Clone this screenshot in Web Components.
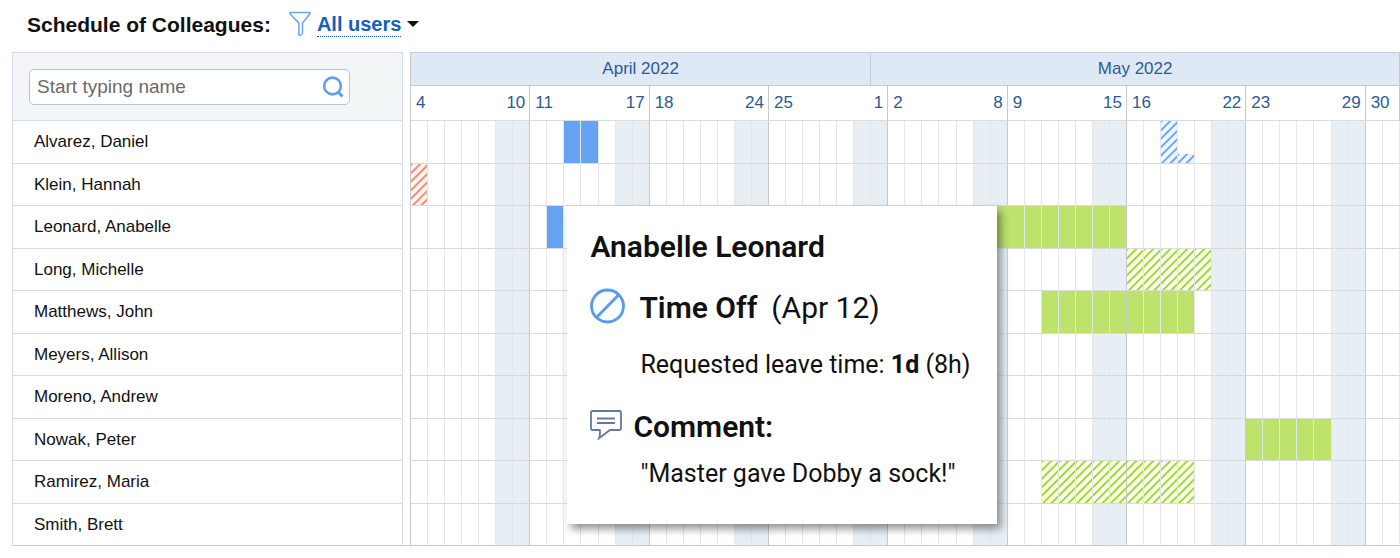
<!DOCTYPE html>
<html lang="en">
<head>
<meta charset="utf-8">
<title>Schedule of Colleagues</title>
<style>
  body { margin: 0; background: #fff; color: #111; font: 17px/20px "Liberation Sans", Arial, sans-serif; }
</style>
</head>
<body>
<schedule-page>
  <user-filter slot="filter">All users</user-filter>
  <schedule-board>
    <leave-card slot="card">
      <span slot="name">Anabelle Leonard</span>
      <span slot="type">Time Off</span>
      <span slot="dates">(Apr 12)</span>
      <span slot="amount">Requested leave time: <b>1d</b> (8h)</span>
      <span slot="comment">"Master gave Dobby a sock!"</span>
    </leave-card>
  </schedule-board>
</schedule-page>

<template id="page-tpl">
  <style>
    :host { display: block; padding: 0 0 11px 12px; }
    header { display: flex; align-items: center; gap: 18px; height: 48px; padding: 0 15px 4px; }
    h1 { margin: 0; font-size: 21px; line-height: 28px; padding-top: 2px; }
  </style>
  <header><h1>Schedule of Colleagues:</h1><slot name="filter"></slot></header>
  <slot></slot>
</template>

<template id="filter-tpl">
  <style>
    :host { display: block; }
    button { display: flex; align-items: center; gap: 6px; border: 0; padding: 0; background: none; font: bold 20px/24px "Liberation Sans", Arial, sans-serif; color: #1560bd; cursor: pointer; }
    svg { display: block; flex: none; }
    span { border-bottom: 1px dotted #1560bd; }
  </style>
  <button type="button" aria-haspopup="listbox">
    <svg width="22" height="26" viewBox="0 0 22 26" fill="none" stroke="#66a3f0" stroke-width="1.5" stroke-linejoin="round"><path d="M1.6 1.5h18.8q.9 0 .5 1.2L13.500 12v10q-.1 1.500-2.600 2.400-1 .1-1-1V12L1.200 3Q.7 1.600 1.600 1.500z"/></svg>
    <span><slot></slot></span>
    <svg width="12" height="6" viewBox="0 0 12 6"><path d="M0 0h12L6 6z" fill="#111"/></svg>
  </button>
</template>

<template id="search-tpl">
  <style>
    :host { display: block; }
    label { display: flex; align-items: center; box-sizing: border-box; max-width: 321px; height: 36px; padding: 0 5px 0 7px; border: 1px solid #b6c5d5; border-radius: 5px; background: #fff; }
    input { flex: 1; min-width: 0; border: 0; padding: 0; outline: 0; background: none; font: 19px/24px "Liberation Sans", Arial, sans-serif; color: #111; }
    input::placeholder { color: #6a6a6a; opacity: 1; }
  </style>
  <label>
    <input type="text" placeholder="Start typing name" aria-label="Start typing name">
    <svg width="22" height="22" viewBox="0 0 22 22" fill="none" stroke="#5f9fee"><circle cx="10.500" cy="10" r="8.400" stroke-width="2.600"/><path d="M15.500 15.500l5 5" stroke-width="3"/></svg>
  </label>
</template>

<template id="card-tpl">
  <style>
    :host { display: block; box-sizing: border-box; width: 430px; padding: 23px 0 35px 23px; background: #fff; box-shadow: 4px 5px 8px rgba(0,0,0,.42); font: 25px/30px Roboto, sans-serif; color: #111; text-align: left; white-space: nowrap; }
    h2, h3, p { margin: 0; }
    h2, h3 { font-size: 30px; line-height: 36px; font-weight: 600; }
    .row { display: flex; align-items: center; }
    .type { gap: 14px; padding: 23px 0 22px; font-size: 30px; line-height: 36px; }
    .type svg { margin-bottom: 4px; }
    .comment { gap: 11px; padding: 29px 0 14px; }
    .comment svg { margin-bottom: 5px; }
    p { padding-left: 50px; }
    svg { flex: none; }
  </style>
  <h2><slot name="name"></slot></h2>
  <div class="row type">
    <svg width="35" height="36" viewBox="0 0 35 36" fill="none" stroke="#559bf0" stroke-width="2.8"><circle cx="17.500" cy="18" r="16"/><path d="M6.500 29.500l22-22.500"/></svg>
    <h3><slot name="type"></slot></h3><slot name="dates"></slot>
  </div>
  <p><slot name="amount"></slot></p>
  <div class="row comment">
    <svg width="32" height="30" viewBox="0 0 32 30" fill="none" stroke="#64799d" stroke-width="1.8"><path d="M2.400 1h27.200Q31 1 31 2.400v16.200q0 1.400-1.400 1.400H20L9 28.300q1.400-3.500.8-8.300H2.400Q1 20 1 18.600V2.400Q1 1 2.400 1zM7 8.500h18M7 13h18"/></svg>
    <h3>Comment:</h3>
  </div>
  <p><slot name="comment"></slot></p>
</template>

<template id="board-tpl">
  <style>
    :host { display: block; }
    table { width: 100%; table-layout: fixed; border-collapse: separate; border-spacing: 0; }
    .who { width: 391px; }
    .gap { width: 8px; }
    th, td { padding: 0; box-sizing: border-box; font-weight: normal; }
    .find { padding: 0 16px; text-align: left; background: #f2f6f7; border: 1px solid #d3deea; }
    .spacer { border-right: 1px solid #c9c9cd; }
    .month { height: 34px; background: #dfe9f5; color: #2c5a94; border: 1px solid #c4ccd6; border-left: 0; }
    .week { height: 35px; color: #2c5a94; border-right: 1px solid #c9c9cd; border-bottom: 1px solid #dcdcdc; }
    .week div { display: flex; justify-content: space-between; padding: 0 4px 0 5px; }
    tbody tr { height: 43px; }
    tbody tr:nth-child(even) { height: 42px; }
    .name { padding: 0 21px; text-align: left; color: #111; border: 1px solid #d3deea; border-top: 0; border-left: 1px solid #d3deea; }
    .day { border-right: 1px solid #e6e6ea; border-bottom: 1px solid #dadada; }
    .off { background: #e7eff5; }
    .end { border-right-color: #c9c9cd; }
    .timeoff { background: #66a3f2; }
    .vacation { background: #bde36d; }
    .asked { background: repeating-linear-gradient(135deg, var(--line) 0 1px, var(--fill) 2px 5px, var(--line) 6px); }
    .sick { --line: #f98b72; --fill: #fff5f2; }
    .half, .blue { --line: #6fa9f5; --fill: #f1f7ff; }
    .half { background-size: 100% 9px; background-position: bottom; background-repeat: no-repeat; }
    .green { --line: #a2da34; --fill: #fbfff1; }
    tbody tr:last-child > * { border-bottom-color: #c9c9cd; }
    tbody tr:last-child .spacer { border-bottom: 1px solid #c9c9cd; }
    .anchor { position: relative; }
    .pop { position: absolute; z-index: 1; top: 0; left: calc(100% + 4px); }
  </style>
  <table>
    <colgroup><col class="who"><col class="gap"><col span="58"></colgroup>
    <thead>
      <tr><th class="find" rowspan="2"><search-box></search-box></th><td class="spacer" rowspan="2"></td><th class="month" colspan="27">April 2022</th><th class="month" colspan="31">May 2022</th></tr>
      <tr class="weeks"></tr>
    </thead>
    <tbody></tbody>
  </table>
</template>

<script>
  const attach = (el, id) => {
    const root = el.attachShadow({ mode: "open" });
    root.append(document.getElementById(id).content.cloneNode(true));
    return root;
  };

  // Day indexes count from Monday, 4 April 2022.
  const DAYS = 58;
  const WEEKS = [[4, 10], [11, 17], [18, 24], [25, 1], [2, 8], [9, 15], [16, 22], [23, 29], [30]];
  const PEOPLE = [
    ["Alvarez, Daniel", [[9, 10, "timeoff"], [44, 44, "asked blue"], [45, 45, "asked half"]]],
    ["Klein, Hannah", [[0, 0, "asked sick"]]],
    ["Leonard, Anabelle", [[8, 8, "timeoff anchor"], [28, 41, "vacation"]]],
    ["Long, Michelle", [[42, 46, "asked green"]]],
    ["Matthews, John", [[37, 45, "vacation"]]],
    ["Meyers, Allison", []],
    ["Moreno, Andrew", []],
    ["Nowak, Peter", [[49, 53, "vacation"]]],
    ["Ramirez, Maria", [[37, 45, "asked green"]]],
    ["Smith, Brett", []]
  ];

  class SchedulePage extends HTMLElement {
    constructor() { super(); attach(this, "page-tpl"); }
  }
  class UserFilter extends HTMLElement {
    constructor() { super(); attach(this, "filter-tpl"); }
  }
  class SearchBox extends HTMLElement {
    constructor() { super(); attach(this, "search-tpl"); }
  }
  class LeaveCard extends HTMLElement {
    constructor() { super(); attach(this, "card-tpl"); }
  }
  class ScheduleBoard extends HTMLElement {
    constructor() {
      super();
      const root = attach(this, "board-tpl");
      root.querySelector(".weeks").innerHTML = WEEKS.map(w =>
        `<th class="week" colspan="${w.length === 2 ? 7 : 2}"><div>${w.map(d => `<span>${d}</span>`).join("")}</div></th>`).join("");
      root.querySelector("tbody").innerHTML = PEOPLE.map(([name, leaves]) => {
        let cells = "";
        for (let i = 0; i < DAYS; i++) {
          const leave = leaves.find(([from, to]) => i >= from && i <= to);
          const cls = ["day"];
          if (i % 7 === 6) cls.push("end");
          if (leave) cls.push(leave[2]);
          else if (i % 7 > 4) cls.push("off");
          const pop = leave && leave[2].includes("anchor") ? '<div class="pop"><slot name="card"></slot></div>' : "";
          cells += `<td class="${cls.join(" ")}">${pop}</td>`;
        }
        return `<tr><th class="name" scope="row">${name}</th><td class="spacer"></td>${cells}</tr>`;
      }).join("");
    }
  }
  customElements.define("search-box", SearchBox);
  customElements.define("user-filter", UserFilter);
  customElements.define("leave-card", LeaveCard);
  customElements.define("schedule-board", ScheduleBoard);
  customElements.define("schedule-page", SchedulePage);
</script>
</body>
</html>
